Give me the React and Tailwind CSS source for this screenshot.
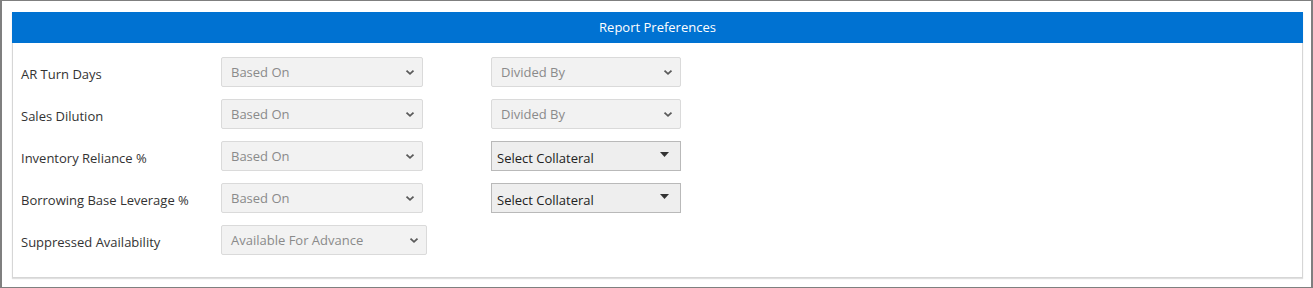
import React from "react";

const Chevron = () => (
  <svg width="10" height="7" viewBox="0 0 10 7" className="shrink-0">
    <path d="M1.5 1.6 L5 4.8 L8.5 1.6" fill="none" stroke="#5a5a5a" strokeWidth="1.8" />
  </svg>
);

const Caret = () => (
  <svg width="9" height="5" viewBox="0 0 9 5" className="shrink-0">
    <path d="M0 0 H9 L4.5 5 Z" fill="#333" />
  </svg>
);

const DisabledSelect = ({ text, w }) => (
  <div
    className={`${w} h-[30px] flex items-center justify-between pl-[9px] pr-[7px] bg-[#f2f2f2] border border-[#dadada] rounded-[2px] text-[13px] text-[#8a8a8a]`}
  >
    <span className="leading-none">{text}</span>
    <Chevron />
  </div>
);

const CollateralSelect = () => (
  <div className="w-[190px] h-[30px] flex items-center justify-between pl-[5px] pr-[11px] bg-[#eeeeee] border border-[#b9b9b9] text-[13px] text-[#222]">
    <span className="leading-none mt-[5px]">Select Collateral</span>
    <span className="-mt-[3px]">
      <Caret />
    </span>
  </div>
);

const rows = [
  { label: "AR Turn Days", a: "Based On", b: "divided" },
  { label: "Sales Dilution", a: "Based On", b: "divided" },
  { label: "Inventory Reliance %", a: "Based On", b: "collateral" },
  { label: "Borrowing Base Leverage %", a: "Based On", b: "collateral" },
  { label: "Suppressed Availability", a: "Available For Advance", b: null },
];

export default function App() {
  return (
    <div
      className="w-[1313px] h-[288px] border-x-2 border-y border-[#7f7f7f] bg-white pl-[10px] pt-[11px]"
      style={{ fontFamily: '"Open Sans", "Noto Sans", sans-serif' }}
    >
      <div className="w-[1291px] h-[266px] border border-[#d6d6d6] shadow-[0_1px_1px_rgba(0,0,0,0.12)] bg-white">
        <div className="h-[31px] -mt-px -mx-px bg-[#0072d2] flex items-center justify-center text-white text-[13px] font-medium">
          Report Preferences
        </div>
        <div className="pt-[14px] pl-[8px] flex flex-col gap-[12px]">
          {rows.map((r) => (
            <div key={r.label} className="flex items-center h-[30px]">
              <div className="w-[200px] text-[13px] text-[#333] mt-[5px]">{r.label}</div>
              <DisabledSelect
                text={r.a}
                w={r.b === null ? "w-[206px]" : "w-[202px]"}
              />
              {r.b && (
                <div className="ml-[68px]">
                  {r.b === "divided" ? (
                    <DisabledSelect text="Divided By" w="w-[190px]" />
                  ) : (
                    <CollateralSelect />
                  )}
                </div>
              )}
            </div>
          ))}
        </div>
      </div>
    </div>
  );
}
